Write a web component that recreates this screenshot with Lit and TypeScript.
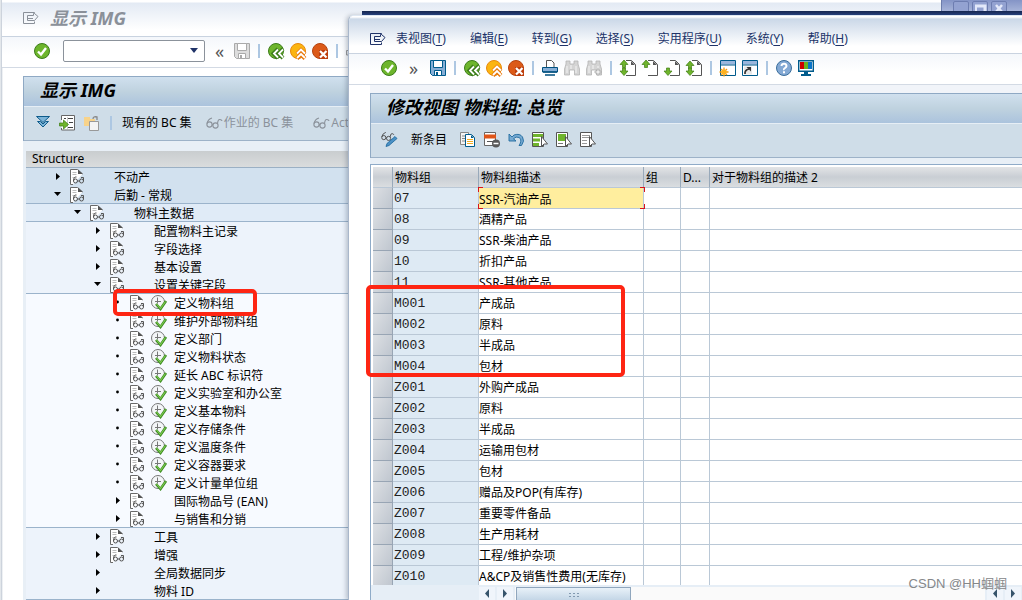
import { LitElement, html, svg, css, nothing } from "lit";
import { customElement, property } from "lit/decorators.js";

const G = "#6fb42c";
const circle = (fill: string, edge: string) => svg`<circle cx="8" cy="8" r="7.5" fill=${fill} stroke=${edge}/>`;
const page = svg`<path d="M6 .5H11.5L15.5 4.500V15.500H6" fill="#fff" stroke="#555"/><path d="M11 1v4h4z" fill="#555"/>`;
const up = (y: number) => svg`<path d=${`M4 ${y}l4 4.500H5.500v3h-3v-3H0z`} fill=${G} stroke="#3f7d12" stroke-width=".7"/>`;
const down = (y: number) => svg`<path d=${`M4 ${y}l4-4.500H5.500v-3h-3v3H0z`} fill=${G} stroke="#3f7d12" stroke-width=".7"/>`;
const pointer = svg`<path d="M9.500 4.500v10l2.500-2.500h3.500z" fill="#fff" stroke="#555"/>`;
const floppy = (a: string, b: string) => svg`<path d="M.5.5h15v15H2.500L.5 13.500z" fill=${b} stroke=${a}/><path d="M3.500.5h9v7h-9z" fill="#fff" stroke=${a}/><path d="M4.500 10.500h7v5h-7z" fill="#fff" stroke=${a}/><path d="M6 12h2v3H6z" fill=${a}/>`;
const glasses = (c: string) => svg`<g fill="none" stroke=${c} stroke-width="1.100"><circle cx="3.500" cy="9.500" r="2.600"/><circle cx="9.500" cy="10.500" r="2.600"/><path d="M1 8.500Q2 4 6 3M6 9.500L7 10M11.500 8.500Q12 4 14 4.500T16 6"/></g>`;
const binoculars = svg`<path d="M2 1h4v3h4V1h4v3l1.500 5v6h-5v-5h-5v5h-5V9L2 4z" fill="#d4d4d4" stroke="#b4b4b4" stroke-width=".8"/><path d="M3 6v7M7 5v4M12 6v7" stroke="#f4f4f4"/>`;
const win = svg`<path d="M.5.5h15v15H.5z" fill="#fff" stroke="#005b8c"/><path d="M1 1h14v3.500H1z" fill="#9ab6dc"/><path d="M1 5h14" stroke="#005b8c"/>`;

const ICONS: Record<string, unknown> = {
  exit: svg`<path d="M11.500 3.500V2.500H.5v11h11v-2M4.500 5.500v5M4.500 5.500h6v-2h1l3.500 3-3.500 4h-7M4.500 8.500h5.500" fill="none" stroke="currentColor"/>`,
  check: svg`${circle("#6db52c", "#3c7d1a")}<path d="M4 8.500l3 3 5-6.500" fill="none" stroke="#fff" stroke-width="2.400"/>`,
  save: floppy("#005b8c", "#86aed6"),
  saveOff: floppy("#aaa", "#ddd"),
  back: svg`${circle("#6db52c", "#3c7d1a")}<path d="M10 6l-4.500 4.500L10 15M15 6l-4.500 4.500L15 15" fill="none" stroke="#3c7d1a" stroke-width="4"/><path d="M10 6.500l-4 4 4 4M15 6.500l-4 4 4 4" fill="none" stroke="#fff" stroke-width="1.800"/>`,
  up: svg`${circle("#fbb511", "#e8880c")}<path d="M7 11l4-4 4 4M7 15.500l4-4 4 4" fill="none" stroke="#e8780c" stroke-width="4"/><path d="M7 10.500l4-4 4 4M7 15l4-4 4 4" fill="none" stroke="#fff" stroke-width="1.800"/>`,
  cancel: svg`${circle("#dc5a18", "#b4420e")}<path d="M7 7h9v9H7z" fill="#bd3d0b"/><path d="M8 8l6.500 6.500M14.500 8L8 14.500" stroke="#fff" stroke-width="2.200"/>`,
  print: svg`<path d="M4.500 7V.5h5l2.500 2.500v4" fill="#fff" stroke="#555"/><path d="M.5 7.500h15v4.500H.5z" fill="#86aed6" stroke="#00507f"/><path d="M1 12h14M3 15h10" stroke="#00507f" stroke-width="1.600"/>`,
  printOff: svg`<path d="M4.500 7V.5h7v6.500M.5 7.500h15v4.500H.5z" fill="#eee" stroke="#999"/>`,
  find: binoculars,
  findNext: svg`${binoculars}<path d="M9 11h2V9h2v2h2v2h-2v2h-2v-2H9z" fill="#eee" stroke="#aaa" stroke-width=".8"/>`,
  first: svg`${page}${up(0)}${down(15.5)}`,
  prev: svg`${page}${up(0)}`,
  next: svg`${page}${down(15.5)}`,
  last: svg`${page}${up(1)}${down(15.5)}`,
  session: svg`${win}<g stroke="#f49a0c" stroke-width="1.300"><path d="M4 7.500v9M-.5 12h9M1 9l6 6M7 9l-6 6"/></g><circle cx="4" cy="12" r="2.500" fill="#ffb21c"/>`,
  shortcut: svg`${win}<path d="M2 6.500h8v8H2z" fill="#e8e8e8"/><path d="M3 14q-.5-4 4-5" fill="none" stroke="#333" stroke-width="1.700"/><path d="M4.500 7h4.500v4.500z" fill="#333"/>`,
  help: svg`${circle("#84a9d4", "#3a6e9c")}<path d="M5.500 6Q5.700 3.700 8 3.700T10.500 6Q10.500 7 9 8T8 10M8 11.300v2" fill="none" stroke="#fff" stroke-width="2"/>`,
  monitor: svg`<path d="M.7.700h14.600v10.600H.7z" fill="#fff" stroke="#005b8c" stroke-width="1.400"/><path d="M2 2h4v7H2z" fill="#c00"/><path d="M6 2h4v7H6z" fill="#67b31f"/><path d="M10 2h4v7h-4z" fill="#0a74c8"/><path d="M6 11.500h4v2.500H6zM3 14h10v2H3z" fill="#005b8c"/>`,
  expand: svg`<path d="M.5 1.500h13L7 7.500z" fill="#7db4d8" stroke="#0e5b8b"/><path d="M1.500 6.500h3L7 9l2.500-2.500h3L7 12z" fill="#7db4d8" stroke="#0e5b8b"/>`,
  into: svg`<path d="M1.500 5V.5h13v14.500h-13v-2" fill="#fff" stroke="#666"/><path d="M4 3.500h2M8 3.500h5M9 7.500h4M8 12.500h5" stroke="#444"/><path d="M7.500 2v12" stroke="#ccc"/><path d="M-.5 8h4V5l5 4.500-5 4.500v-3h-4z" fill=${G} stroke="#3f7d12" stroke-width=".7"/>`,
  copyOff: svg`<path d="M0 2h6v2h5v7H0z" fill="#f8d38a"/><path d="M9 4q0-3 4-2v3" fill="none" stroke="#888" stroke-width="1.300"/><path d="M5.500 6.500h9v9h-9z" fill="#f4f4f4" stroke="#999"/>`,
  glassesOff: glasses("#8b929b"),
  pencil: svg`<g transform="translate(0 -2) scale(.8)">${glasses("#444")}</g><path d="M5 14.500l1-3 8-7 2 2-8 7z" fill="#4c91c5" stroke="#17659c" stroke-width=".8"/>`,
  copy: svg`<path d="M.5.500h8v12h-8z" fill="#f4f4f4" stroke="#888"/><path d="M2 4h3M2 6.500h3M2 9h3" stroke="#888"/><path d="M5.500 2.500h6l3 3v9h-9z" fill="#fff" stroke="#005b8c"/><path d="M11 3v3h3z" fill="#005b8c"/><path d="M7 7.500h6M7 9.500h6M7 11.500h6" stroke="#f2ad22"/>`,
  remove: svg`<path d="M.5.500h11v13H.5z" fill="#fff" stroke="#666"/><path d="M0 2.500h12v4H0z" fill="#df5519"/><path d="M3 9.500h6" stroke="#555"/><circle cx="12" cy="11.500" r="4" fill="#595959"/><path d="M9.500 11.500h5" stroke="#fff" stroke-width="1.600"/>`,
  undo: svg`<path d="M1 2v7h7L5.500 6.800Q8 4 11 5.500T12 12l-1 1.500h2.500Q17 9 14.500 5T6 3L4 5z" fill="#76a9d1" stroke="#206b9f" stroke-width=".9"/>`,
  selAll: svg`<path d="M.5.5h11v14H.5z" fill="#fff" stroke="#555"/><path d="M1 2h10v3H1zM1 6.500h7v3H1zM1 11h6v3H1z" fill=${G}/>${pointer}`,
  selBlock: svg`<path d="M.5.5h11v14H.5z" fill="#fff" stroke="#555"/><path d="M2 2h8v7H2z" fill=${G}/><path d="M2 11.500h5" stroke="#777"/>${pointer}`,
  selNone: svg`<path d="M.5.5h11v14H.5z" fill="#fff" stroke="#555"/><path d="M2 3.500h8M2 5.500h8M2 8.500h5M2 11.500h5" stroke="#999"/>${pointer}`,
  doc: svg`<path d="M3 15.500H.5V.5h7L12.500 5" fill="#fff" stroke="#6a6a6a"/><path d="M8 .500V5h5z" fill="#555"/><path d="M2.500 3.500h4M2.500 5.500h4M2.500 8.500h3" stroke="#bbb"/><g fill="none" stroke="#555"><circle cx="5.500" cy="12" r="2"/><circle cx="11.500" cy="12" r="2"/><path d="M3.500 12Q3.500 7.500 6.500 8M7.500 12h2M13.500 12V8.500H11"/></g>`,
  run: svg`<circle cx="7" cy="7" r="6.500" fill="#f4f6f8" stroke="#777"/><path d="M6.500 2.500v6M4 6.500h6" stroke="#777"/><path d="M5 9l4.500 5L15 6" fill="none" stroke="#3c8a20" stroke-width="2.600"/><path d="M5.500 9l4 4.500L14.500 6.500" fill="none" stroke="#7ccb50" stroke-width="1.100"/>`,
};
const icon = (name: string) => html`<svg class="icon" width="16" height="16" viewBox="0 0 16 16" aria-hidden="true">${ICONS[name]}</svg>`;
const tool = (name: string, label: string) => html`<button class="tool" aria-label=${label}>${icon(name)}</button>`;
const sep = html`<span class="sep"></span>`;

const shared = css`
  * { box-sizing: border-box; }
  .icon { display: block; flex: none; overflow: visible; }
  button { font: inherit; color: inherit; border: 0; padding: 0; background: none; white-space: nowrap; }
  .tool { display: flex; width: 16px; height: 16px; flex: none; }
  .sep { width: 6px; height: 14px; flex: none; background: linear-gradient(#adc7e2, #adc7e2) center / 2px 100% no-repeat; }
  .bar { display: flex; align-items: center; }
  .title { margin: 0; font-size: 18px; line-height: 24px; font-weight: 700; font-style: italic; white-space: nowrap; }
  .menu { border-bottom: 1px solid #c9d3e0; }
  .tools { gap: 6px; height: 31px; padding-bottom: 2px; border-bottom: 1px solid #d3dae4; background: linear-gradient(#f4f7fb, #fff 60%); }
  .more { text-align: center; font-size: 18px; line-height: 16px; height: 18px; color: #555; }
  .heading { height: 31px; padding-bottom: 3px; background: linear-gradient(#d0e0ee, #bfd2df 50%, #abc3dd); border-top: 1px solid #8fa9c4; border-bottom: 1px solid #e6eef5; }
  .apps { height: 34px; padding-bottom: 1px; background: #cfdde8; border-bottom: 1px solid #9db2c8; }
`;

interface Node { text: string; level: number; kind: "closed" | "open" | "leaf"; doc?: boolean; end?: boolean; }
const n = (text: string, level: number, kind: Node["kind"] = "closed", end = false, doc = true): Node => ({ text, level, kind, end, doc });
const TREE: Node[] = [
  n("不动产", 0), n("后勤 - 常规", 0, "open", true), n("物料主数据", 1, "open", true),
  n("配置物料主记录", 2), n("字段选择", 2), n("基本设置", 2), n("设置关键字段", 2, "open", true),
  ...["定义物料组", "维护外部物料组", "定义部门", "定义物料状态", "延长 ABC 标识符", "定义实验室和办公室", "定义基本物料", "定义存储条件", "定义温度条件", "定义容器要求", "定义计量单位组"].map((t) => n(t, 3, "leaf")),
  n("国际物品号 (EAN)", 3), n("与销售和分销", 3, "closed", true),
  n("工具", 2), n("增强", 2), n("全局数据同步", 2, "closed", false, false), n("物料 ID", 2, "closed", true, false),
];

@customElement("img-tree")
class ImgTree extends LitElement {
  static styles = [shared, css`
    :host { display: block; }
    .head { height: 17px; padding-left: 6px; line-height: 16px; background: linear-gradient(#c9cdcf, #dadcdd); border-bottom: 1px solid #9bb0c4; }
    ul { list-style: none; margin: 0; padding: 0; }
    .row { display: flex; align-items: center; height: 18px; white-space: nowrap; }
    .l0 { background: #d2e1ef; padding-left: 27px; }
    .l1 { background: #e0ebf7; padding-left: 47px; }
    .l2 { background: #edf3fb; padding-left: 67px; }
    .l3 { background: #f7faff; padding-left: 87px; }
    .end { box-shadow: inset 0 -1px #9bb3cb; }
    .mark { width: 17px; height: 16px; flex: none; }
    .slot { width: 21px; height: 16px; flex: none; }
    .run { width: 23px; }
    .text { line-height: 18px; padding-top: 2px; }
  `];
  render() {
    return html`<div class="head">Structure</div><ul>${TREE.map((r) => html`
      <li class="row l${r.level} ${r.end ? "end" : ""}">
        <svg class="mark" viewBox="0 0 17 16" aria-hidden="true">${r.kind === "closed" ? svg`<path d="M3 4v7l4-3.500z"/>` : r.kind === "open" ? svg`<path d="M1 5h7L4.500 9z"/>` : svg`<circle cx="4.500" cy="7" r="1.400"/>`}</svg>
        <span class="slot">${r.doc ? icon("doc") : nothing}</span>
        <span class="slot run">${r.kind === "leaf" ? icon("run") : nothing}</span>
        <span class="text">${r.text}</span>
      </li>`)}</ul>`;
  }
}

const GROUPS: [string, string][] = [
  ["07", "SSR-汽油产品"], ["08", "酒精产品"], ["09", "SSR-柴油产品"], ["10", "折扣产品"], ["11", "SSR-其他产品"],
  ["M001", "产成品"], ["M002", "原料"], ["M003", "半成品"], ["M004", "包材"],
  ["Z001", "外购产成品"], ["Z002", "原料"], ["Z003", "半成品"], ["Z004", "运输用包材"], ["Z005", "包材"],
  ["Z006", "赠品及POP(有库存)"], ["Z007", "重要零件备品"], ["Z008", "生产用耗材"], ["Z009", "工程/维护杂项"], ["Z010", "A&CP及销售性费用(无库存)"],
];

@customElement("group-table")
class GroupTable extends LitElement {
  @property({ attribute: false }) rows = GROUPS;
  static styles = [shared, css`
    :host { display: flex; flex-direction: column; min-height: 0; border-top: 1px solid #8fabc8; border-left: 1px solid #8fabc8; }
    .view { flex: 1; min-height: 0; overflow: hidden; background: #fff; padding: 2px 0 0 2px; }
    table { width: 100%; table-layout: fixed; border-collapse: separate; border-spacing: 0; }
    .c0 { width: 20px; } .c1 { width: 86px; } .c2 { width: 165px; } .c3 { width: 37px; } .c4 { width: 29px; }
    th, td { padding: 1px 0 0; height: 21px; line-height: 19px; white-space: nowrap; text-align: left; font-weight: 400; overflow: hidden; border-right: 1px solid #bac8d6; border-bottom: 1px solid #bac8d6; }
    tr > :last-child { border-right: 0; }
    thead th { padding-left: 2px; background: linear-gradient(#e2e4e6, #c9ced4 50%, #dadde0); border-right-color: #98a9ba; }
    tbody th { background: linear-gradient(120deg, #dde0e4, #bfc6cf); border-color: #98a5b4; }
    .code { background: #deeaf4; font-family: "Liberation Mono", monospace; font-size: 13px; padding-left: 1px; color: #222; }
    .active { overflow: visible; position: relative; padding: 0; }
    input { display: block; width: 100%; height: 20px; padding: 1px 0 0; border: 0; border-radius: 0; background: #ffee9e; font: inherit; color: #000; outline: none; }
    .frame { position: absolute; inset: -1px -2px -1px -1px; --r: linear-gradient(#d9141c, #d9141c); pointer-events: none;
      background: var(--r) 0 0 / 5px 1px no-repeat, var(--r) 0 0 / 1px 5px no-repeat, var(--r) 100% 0 / 5px 1px no-repeat, var(--r) 100% 0 / 1px 5px no-repeat,
      var(--r) 0 100% / 5px 1px no-repeat, var(--r) 0 100% / 1px 5px no-repeat, var(--r) 100% 100% / 5px 1px no-repeat, var(--r) 100% 100% / 1px 5px no-repeat; }
    .scroll { display: flex; flex: none; height: 15px; gap: 2px; padding: 2px 1px 0 108px; background: #e6eef6; }
    .arrow { width: 16px; height: 13px; flex: none; background: #f0f5fb; }
    .arrow svg { display: block; }
    .track { flex: 1; padding-left: 1px; background: #fafafa; }
    .thumb { width: 115px; height: 13px; border: 1px solid #8fa6bd; border-bottom: 0; background: linear-gradient(#e8f1f8, #c4d6e6); }
    .thumb svg { display: block; margin: 0 auto; }
  `];
  render() {
    const arrow = (d: string, label: string) => html`<button class="arrow" aria-label=${label}><svg width="16" height="13" viewBox="0 0 16 13"><path d=${d} fill="#36546b"/></svg></button>`;
    const left = arrow("M10 2v9L6 6.500z", "向左"), right = arrow("M6 2v9l4-4.500z", "向右");
    return html`<div class="view"><table>
      <colgroup><col class="c0"><col class="c1"><col class="c2"><col class="c3"><col class="c4"><col></colgroup>
      <thead><tr><th></th><th>物料组</th><th>物料组描述</th><th>组</th><th>D...</th><th>对于物料组的描述 2</th></tr></thead>
      <tbody>${this.rows.map(([code, text], i) => html`<tr><th></th><td class="code">${code}</td>
        ${i === 0 ? html`<td class="active"><input aria-label="物料组描述" .value=${text}><span class="frame"></span></td>` : html`<td>${text}</td>`}
        <td></td><td></td><td></td></tr>`)}</tbody></table></div>
      <div class="scroll">${left}${right}<div class="track"><div class="thumb"><svg width="12" height="12" viewBox="0 0 12 12"><path d="M1 5.500h10M1 8.500h10" stroke="#8299b0" stroke-dasharray="2 2"/></svg></div></div>${left}${right}</div>`;
  }
}

const MENUS = [["表视图", "T"], ["编辑", "E"], ["转到", "G"], ["选择", "S"], ["实用程序", "U"], ["系统", "Y"], ["帮助", "H"]];

@customElement("app-root")
class AppRoot extends LitElement {
  static styles = [shared, css`
    :host { display: block; position: relative; height: 100vh; overflow: hidden; background: linear-gradient(#8494c6, #a9b6da 12px, #eef1f5 12px); font: 12px/18px "Noto Sans", "Noto Sans CJK SC", sans-serif; color: #000; }
    .window { position: absolute; display: flex; flex-direction: column; background: #fff; }
    .back { left: 0; top: 0; right: 80px; bottom: 0; padding-left: 2px; border-right: 1px solid #6d7dab; background: linear-gradient(90deg, #e3e7eb 1px, #bcc5d1 1px, #fff 3px); }
    .back .menu { height: 37px; gap: 11px; padding-left: 21px; color: #8a9099; background: linear-gradient(#fff 2px, #e3eaf4 3px, #fff 30px); }
    .back .tools { padding-left: 32px; }
    .combo { position: relative; display: flex; margin-left: 7px; }
    .combo select { appearance: none; width: 142px; height: 22px; border: 1px solid #8b929b; border-radius: 2px; background: #fff; }
    .combo svg { position: absolute; right: 7px; top: 8px; pointer-events: none; }
    .body { flex: 1; min-height: 0; display: flex; flex-direction: column; }
    .back .body { margin: 8px 0 0 21px; background: #e8eff6; overflow: hidden; }
    .panel { border-left: 1px solid #8fa9c4; flex: none; }
    .back .heading { padding-left: 16px; }
    .back .apps { padding-left: 12px; }
    .gap { margin-left: 8px; }
    .label { margin-left: 8px; }
    .muted { display: flex; align-items: center; gap: 2px; margin-left: 14px; color: #8b929b; }
    .next { margin-left: 20px; }
    img-tree { margin: 10px 0 0 3px; }
    .strip { position: absolute; left: 362px; right: 0; top: 11px; height: 6px; background: linear-gradient(#16264f, #24407f 4px); }
    .chrome { position: absolute; right: 15px; top: 1px; display: flex; gap: 3px; height: 10px; overflow: hidden; }
    .chrome button { width: 16px; height: 16px; border: 1px solid #6d7db0; border-radius: 2px; background: #93a2d1; }
    .chrome svg { display: block; }
    .front { left: 348px; top: 15px; right: 0; bottom: 0; border-top: 1px solid #dfe8f3; border-left: 1px solid #a9b7cb; border-radius: 6px 0 0 0; box-shadow: -2px 0 4px rgba(60, 75, 100, .3); overflow: hidden; }
    .front .menu { height: 38px; gap: 24px; padding: 8px 0 0 21px; color: #203368; background: linear-gradient(#fff 1px, #cbd8e8 3px, #fff 30px); }
    .front .menu .icon { margin-right: -14px; }
    u { text-underline-offset: 2px; }
    .front .tools { padding-left: 32px; }
    .wide { width: 21px; }
    .left { width: 17px; }
    .front .body { margin: 0 0 0 21px; padding-top: 8px; background: #e8eff6; box-shadow: inset 0 8px #f1f4f9; }
    .front .heading { padding-left: 15px; }
    .front .apps { padding-left: 10px; gap: 8px; }
    .new { margin: 0 5px 0 6px; }
    group-table { flex: 1; margin-top: 6px; }
    .mark { position: absolute; border: 4px solid #fe2513; border-radius: 5px; pointer-events: none; }
    .m1 { left: 113px; top: 289px; width: 144px; height: 27px; }
    .m2 { left: 366px; top: 285px; width: 259px; height: 92px; }
    .credit { position: absolute; right: 15px; bottom: 6px; font: 13px/20px "Liberation Sans", "Noto Sans CJK SC", sans-serif; color: #858789; }
  `];
  render() {
    return html`
      <section class="window back" aria-label="显示 IMG">
        <div class="bar menu">${icon("exit")}<span class="title">显示 IMG</span></div>
        <div class="bar tools">${tool("check", "确认")}
          <label class="combo"><select aria-label="命令"><option></option></select><svg width="8" height="5" viewBox="0 0 8 5"><path d="M0 0h8L4 5z" fill="#203368"/></svg></label>
          <button class="more left">«</button>${tool("saveOff", "保存")}${sep}${tool("back", "返回")}${tool("up", "退出")}${tool("cancel", "取消")}${sep}${tool("printOff", "打印")}
        </div>
        <div class="body">
          <div class="panel">
            <div class="bar heading"><h1 class="title">显示 IMG</h1></div>
            <div class="bar apps">${tool("expand", "展开")}<span class="gap">${tool("into", "定位")}</span><span class="gap">${tool("copyOff", "复制")}</span><span class="sep gap"></span>
              <button class="label">现有的 BC 集</button><button class="muted">${icon("glassesOff")}作业的 BC 集</button><button class="muted next">${icon("glassesOff")}Activate</button></div>
          </div>
          <img-tree></img-tree>
        </div>
      </section>
      <div class="chrome">
        <button aria-label="最小化"></button>
        <button aria-label="最大化"><svg width="14" height="14"><path d="M2 4h10v9" fill="none" stroke="#e3e9fa" stroke-width="3"/><path d="M3 4v9" stroke="#e3e9fa" stroke-width="2"/></svg></button>
        <button aria-label="关闭"><svg width="14" height="14"><path d="M4 3l6 7M10 3l-6 7" stroke="#e3e9fa" stroke-width="2.500"/></svg></button>
      </div>
      <div class="strip"></div>
      <section class="window front" aria-label="修改视图 物料组: 总览">
        <nav class="bar menu">${icon("exit")}${MENUS.map(([t, k]) => html`<button>${t}(<u>${k}</u>)</button>`)}</nav>
        <div class="bar tools">${tool("check", "确认")}<button class="more wide">»</button>${tool("save", "保存")}${sep}${tool("back", "返回")}${tool("up", "退出")}${tool("cancel", "取消")}${sep}${tool("print", "打印")}${tool("find", "查找")}${tool("findNext", "查找下一个")}${sep}${tool("first", "首页")}${tool("prev", "上一页")}${tool("next", "下一页")}${tool("last", "末页")}${sep}${tool("session", "新会话")}${tool("shortcut", "快捷方式")}${sep}${tool("help", "帮助")}${tool("monitor", "布局")}</div>
        <div class="body">
          <div class="panel">
            <div class="bar heading"><h2 class="title">修改视图 物料组: 总览</h2></div>
            <div class="bar apps">${tool("pencil", "显示/更改")}<button class="new">新条目</button>${tool("copy", "复制为")}${tool("remove", "删除")}${tool("undo", "撤消")}${tool("selAll", "全选")}${tool("selBlock", "选择块")}${tool("selNone", "取消全选")}</div>
          </div>
          <group-table></group-table>
        </div>
      </section>
      <div class="mark m1"></div><div class="mark m2"></div>
      <div class="credit">CSDN @HH蝈蝈</div>`;
  }
}
